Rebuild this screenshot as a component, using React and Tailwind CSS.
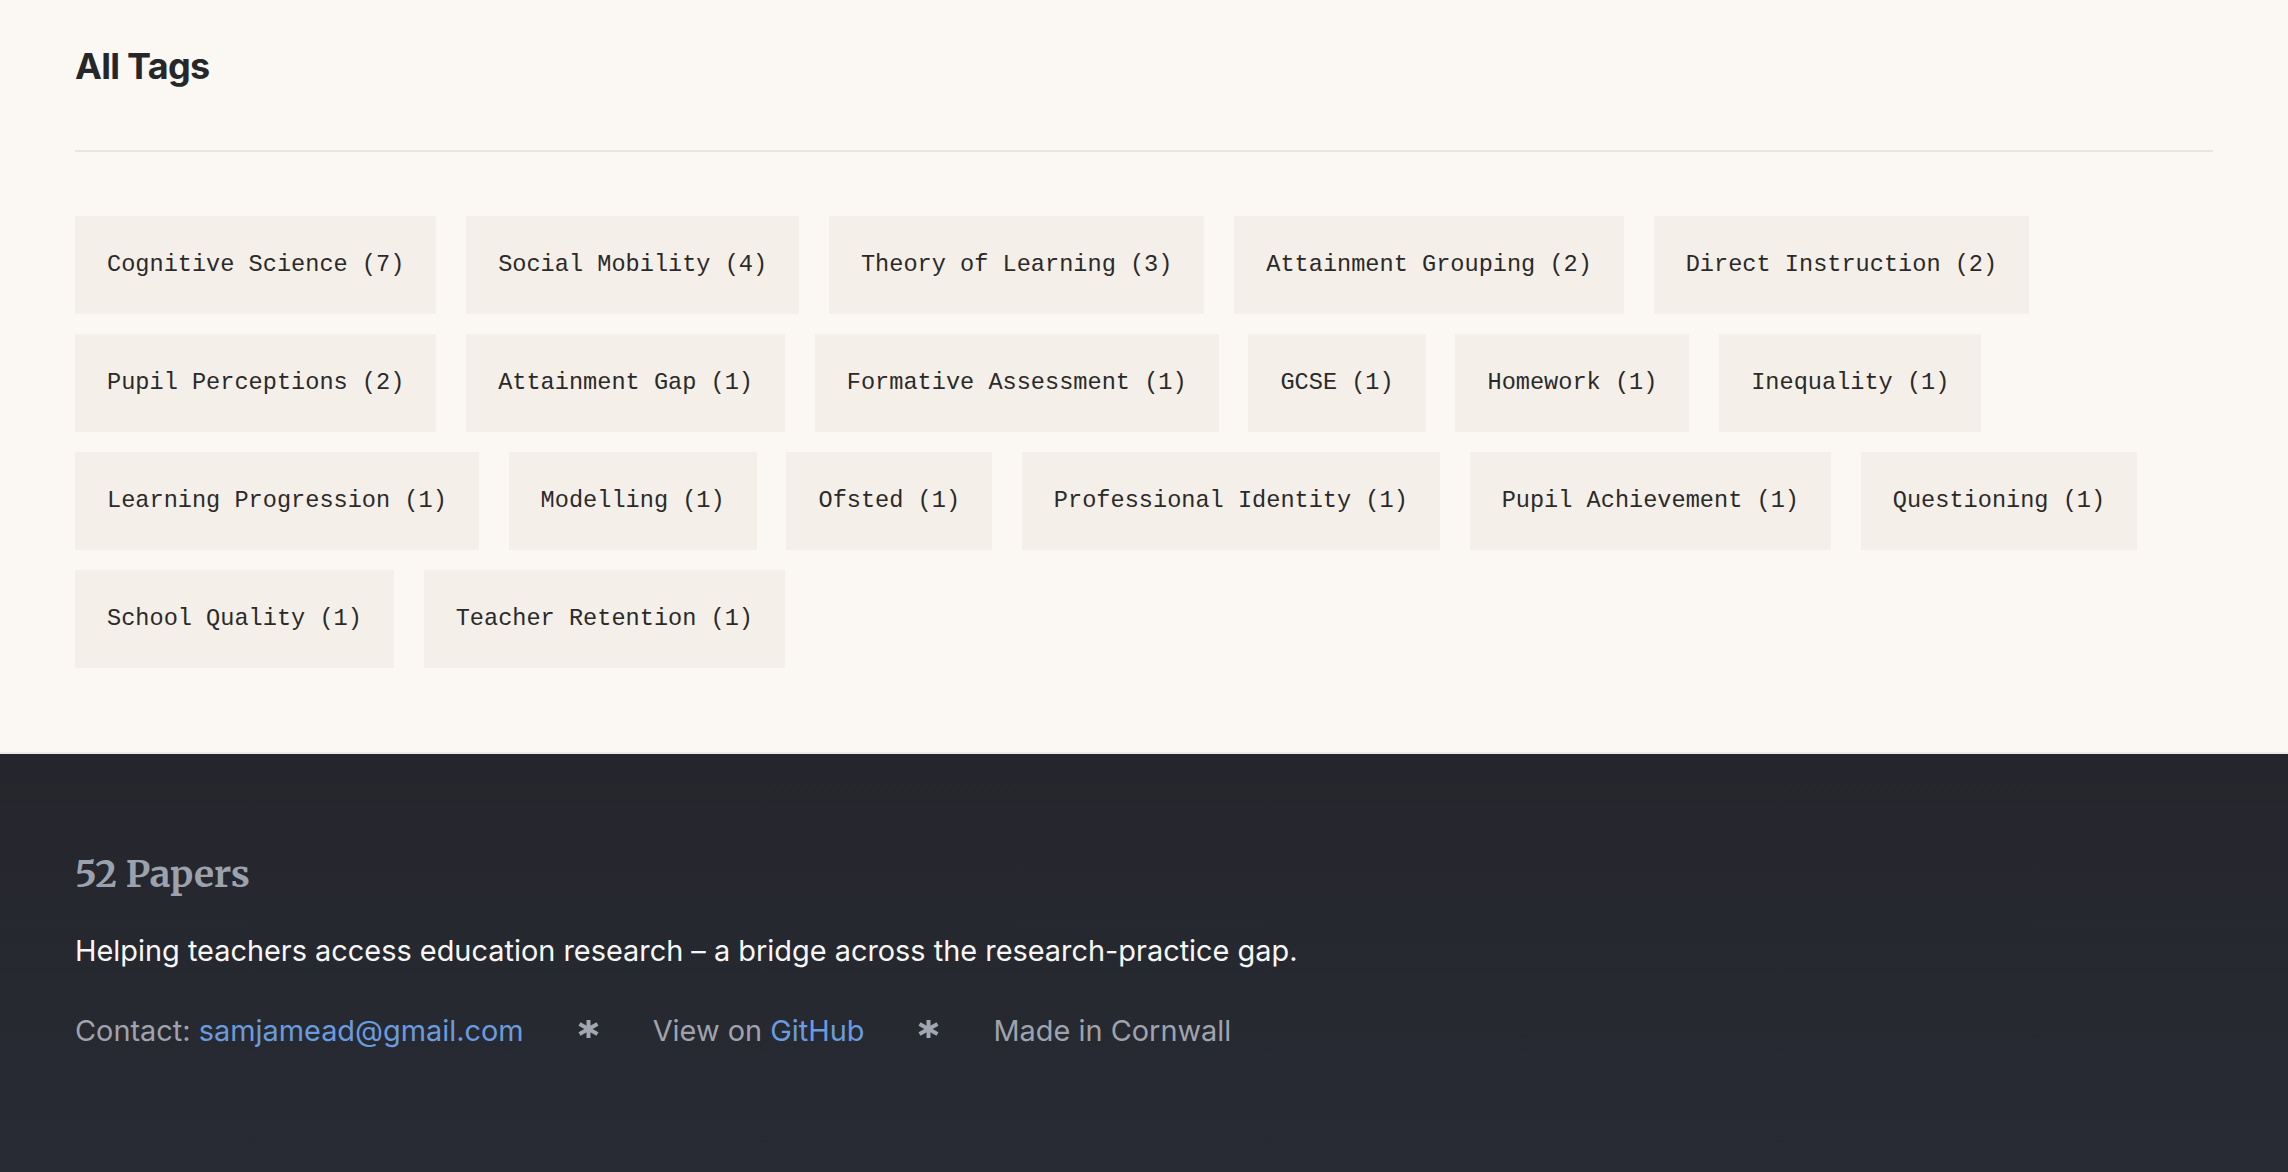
import React from "react";

const tags = [
  "Cognitive Science (7)",
  "Social Mobility (4)",
  "Theory of Learning (3)",
  "Attainment Grouping (2)",
  "Direct Instruction (2)",
  "Pupil Perceptions (2)",
  "Attainment Gap (1)",
  "Formative Assessment (1)",
  "GCSE (1)",
  "Homework (1)",
  "Inequality (1)",
  "Learning Progression (1)",
  "Modelling (1)",
  "Ofsted (1)",
  "Professional Identity (1)",
  "Pupil Achievement (1)",
  "Questioning (1)",
  "School Quality (1)",
  "Teacher Retention (1)",
];

function Star() {
  return (
    <svg width="21" height="18" viewBox="0 0 21 18" className="mt-[9px] shrink-0" aria-hidden="true">
      <g stroke="#a1a6b0" strokeWidth="4" strokeLinecap="butt">
        <line x1="10.5" y1="0" x2="10.5" y2="18" />
        <line x1="1.5" y1="4" x2="19.5" y2="14" />
        <line x1="1.5" y1="14" x2="19.5" y2="4" />
      </g>
    </svg>
  );
}

export default function App() {
  return (
    <div className="min-h-screen flex flex-col bg-[#fbf8f3]" style={{ fontFamily: "Inter, 'Noto Sans', sans-serif" }}>
      <main className="px-[75px] pt-[44px] pb-[84px] bg-[#fbf8f3]">
        <h1 className="text-[36px] leading-[44px] font-bold tracking-[-0.02em] text-[#26272b]">All Tags</h1>
        <div className="mt-[62px] h-[2px] bg-[#e9e6e1]" />
        <div className="mt-[64px] flex flex-wrap gap-x-[29.8px] gap-y-[20px]">
          {tags.map((t) => (
            <span
              key={t}
              className="bg-[#f5efe9] px-[32px] py-[31px] text-[23.6px] leading-[36px] text-[#2a2a2a] whitespace-pre"
              style={{ fontFamily: "'Courier New', 'Liberation Mono', monospace" }}
            >
              {t}
            </span>
          ))}
        </div>
      </main>
      <footer className="flex-1 border-t-2 border-[#eeebe6] bg-gradient-to-b from-[#25262c] to-[#282b34] px-[75px] pt-[97px] pb-[120px]">
        <div
          className="text-[37px] leading-[46px] font-bold text-[#9ca2ad]"
          style={{ fontFamily: "Merriweather, 'DejaVu Serif', serif" }}
        >
          52 Papers
        </div>
        <p className="mt-[34px] text-[28.9px] leading-[40px] text-[#f7f7f7]">
          Helping teachers access education research – a bridge across the research-practice gap.
        </p>
        <div className="mt-[40px] flex items-start gap-[54px] text-[28.9px] leading-[40px] text-[#9ea3ad]">
          <span>
            Contact: <a className="text-[#6b9bdf]">samjamead@gmail.com</a>
          </span>
          <Star />
          <span>
            View on <a className="text-[#6b9bdf]">GitHub</a>
          </span>
          <Star />
          <span>Made in Cornwall</span>
        </div>
      </footer>
    </div>
  );
}
